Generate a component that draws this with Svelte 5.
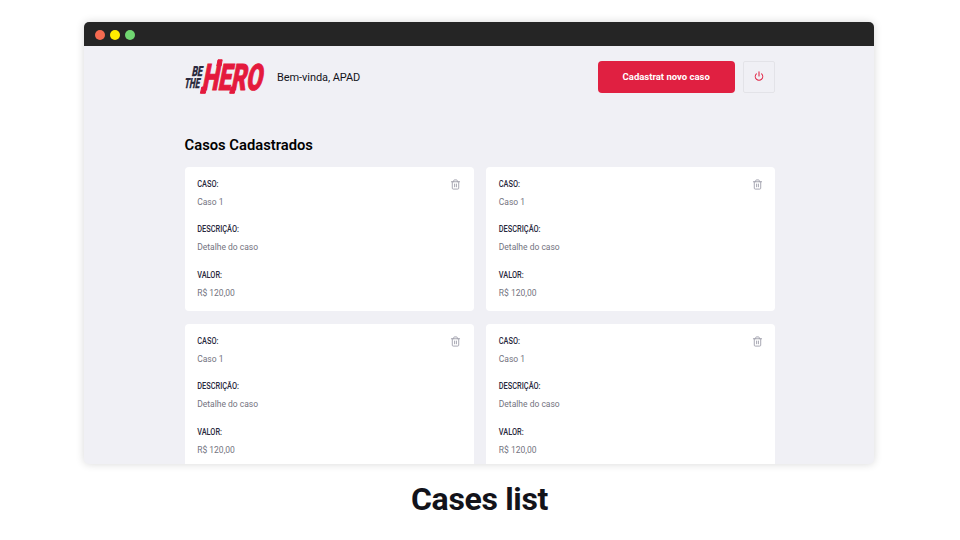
<script>
  const fields = [
    { label: 'CASO:', value: 'Caso 1' },
    { label: 'DESCRIÇÃO:', value: 'Detalhe do caso' },
    { label: 'VALOR:', value: 'R$ 120,00' }
  ];
  const cases = [1, 2, 3, 4];
</script>

<main>
  <section class="window">
    <div class="titlebar">
      <span class="dot red"></span>
      <span class="dot yellow"></span>
      <span class="dot green"></span>
    </div>
    <div class="content">
      <header>
        <svg class="logo" viewBox="0 0 80 36" aria-label="Be The Hero">
          <g class="small">
            <text transform="translate(6.4 17.4) skewX(-11)" font-size="14" textLength="10.6" lengthAdjust="spacingAndGlyphs">BE</text>
            <text transform="translate(-1 28.6) skewX(-11)" font-size="14" textLength="15.2" lengthAdjust="spacingAndGlyphs">THE</text>
          </g>
          <g class="big">
            <text transform="translate(16.4 30.5) skewX(-11)" font-size="36.5" textLength="60" lengthAdjust="spacingAndGlyphs">HERO</text>
            <polygon points="16.8,28 21.6,28 20.3,34.3 15.4,34.3" />
            <polygon points="33,.8 37.2,.8 36,7 31.8,7" />
            <polygon points="46,28 50.6,28 49.3,34.3 44.7,34.3" />
          </g>
        </svg>
        <span class="welcome">Bem-vinda, APAD</span>
        <button class="primary">Cadastrat novo caso</button>
        <button class="power" aria-label="Sair">
          <svg viewBox="0 0 24 24"><path d="M18.36 6.64a9 9 0 1 1-12.73 0M12 2v10" /></svg>
        </button>
      </header>
      <h1>Casos Cadastrados</h1>
      <ul>
        {#each cases as id (id)}
          <li>
            {#each fields as field}
              <strong>{field.label}</strong>
              <p>{field.value}</p>
            {/each}
            <button class="trash" aria-label="Excluir">
              <svg viewBox="0 0 24 24">
                <path d="M3 6h18M19 6v14a2 2 0 0 1-2 2H7a2 2 0 0 1-2-2V6m3 0V4a2 2 0 0 1 2-2h4a2 2 0 0 1 2 2v2M10 11v6M14 11v6" />
              </svg>
            </button>
          </li>
        {/each}
      </ul>
    </div>
  </section>
  <div class="caption">Cases list</div>
</main>

<style>
  :global(body) { background: #fff; }
  * { box-sizing: border-box; }
  main {
    width: 960px;
    height: 540px;
    padding-top: 22px;
    overflow: hidden;
    display: flex;
    flex-direction: column;
    align-items: center;
    font-family: Roboto, "Liberation Sans", sans-serif;
  }
  .window {
    width: 790px;
    height: 442px;
    margin-right: 2px;
    flex: none;
    overflow: hidden;
    border-radius: 5px;
    background: #f0f0f5;
    box-shadow: 0 0 8px rgba(0, 0, 0, .16);
  }
  .titlebar {
    height: 24px;
    padding: 2px 0 0 11px;
    display: flex;
    align-items: center;
    gap: 5px;
    background: #252525;
  }
  .dot { width: 10px; height: 10px; border-radius: 50%; }
  .red { background: #f66a50; }
  .yellow { background: #ffec00; }
  .green { background: #70d671; }
  .content { width: 590.6px; margin-left: 100.6px; padding-top: 13px; }
  header { height: 36px; display: flex; align-items: center; }
  .logo { width: 80px; height: 36px; overflow: visible; }
  .logo text { font-weight: 900; }
  .small { fill: #29293d; stroke: #29293d; stroke-width: .3; }
  .big { fill: #e41a3d; stroke: #e41a3d; stroke-width: 1; }
  .welcome { margin: 1.5px 0 0 12.4px; font-size: 11px; line-height: 16px; letter-spacing: -.07px; color: #13131a; }
  button { padding: 0; border: 0; background: none; font-family: inherit; }
  .primary {
    width: 137px;
    height: 31.6px;
    margin-left: auto;
    padding-bottom: 1px;
    border-radius: 4px;
    background: #e02041;
    color: #fff;
    font-size: 9.5px;
    font-weight: 700;
  }
  .power {
    width: 32px;
    height: 32px;
    margin-left: 8.5px;
    padding-bottom: 2px;
    display: flex;
    align-items: center;
    justify-content: center;
    border: 1px solid #e3e3e8;
    border-radius: 2px;
    color: #e02041;
  }
  button svg { fill: none; stroke: currentColor; stroke-width: 2; stroke-linecap: round; stroke-linejoin: round; }
  .power svg { width: 10px; height: 10px; stroke-width: 2.5; }
  h1 { margin: 41px 0 0; font-size: 14.75px; line-height: 19px; font-weight: 600; color: #000; }
  ul {
    margin: 12px 0 0;
    padding: 0;
    display: grid;
    grid-template-columns: 1fr 1fr;
    gap: 13px 12.6px;
    list-style: none;
  }
  li {
    position: relative;
    height: 144px;
    padding: 11.5px 12.6px;
    border-radius: 4px;
    background: #fff;
  }
  strong { display: block; font-size: 7.4px; line-height: 10px; font-weight: 500; color: #29293d; transform: translateY(.8px) scaleY(1.14); }
  p { margin: 8px 0 16.5px; font-size: 8.5px; line-height: 11px; color: #737380; }
  .trash { position: absolute; top: 12px; right: 12.6px; width: 11px; height: 11px; color: #a0a0ac; }
  .trash svg { display: block; width: 11px; height: 11px; }
  .caption { margin: 16px 1px 0 0; font-size: 32px; line-height: 38px; font-weight: 700; letter-spacing: -.34px; color: #13131a; }
</style>
